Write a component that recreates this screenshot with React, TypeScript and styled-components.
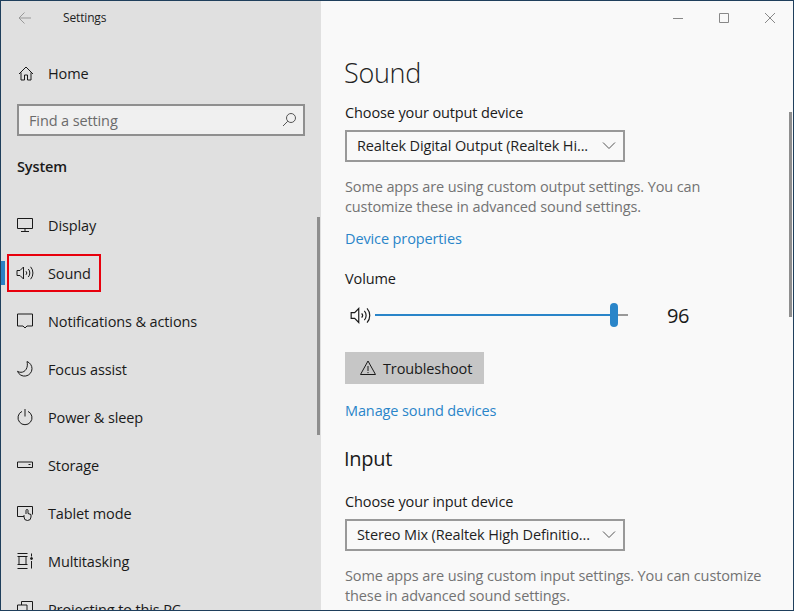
import { ReactNode } from 'react'
import styled, { createGlobalStyle } from 'styled-components'

const GlobalStyle = createGlobalStyle`
  html, body {
    margin: 0;
    padding: 0;
    overflow: hidden;
  }
  * {
    box-sizing: border-box;
  }
`

const Window = styled.div`
  width: 794px;
  height: 611px;
  display: flex;
  overflow: hidden;
  border: 1px solid #1f3f5c;
  font-family: 'Open Sans', 'Noto Sans', sans-serif;
  font-size: 14.5px;
  letter-spacing: -0.12px;
  color: #1a1a1a;
  background: #f9f9f9;
`

const Sidebar = styled.aside`
  position: relative;
  width: 320px;
  flex-shrink: 0;
  background: #e0e0e0;
  overflow: hidden;
`

const TitleBar = styled.div`
  height: 33px;
  display: flex;
  align-items: center;
  padding-left: 17px;
  color: #222;
  font-size: 12px;
  letter-spacing: -0.15px;
`

const BackIcon = styled.svg`
  width: 14px;
  height: 14px;
  margin-right: 31px;
`

const HomeRow = styled.div`
  height: 48px;
  margin-top: 15px;
  display: flex;
  align-items: center;
  padding-left: 15px;
  gap: 14px;
`

const SearchBox = styled.div`
  margin: 7px 0 0 16px;
  width: 288px;
  height: 32px;
  border: 2px solid #8f8f8f;
  background: #f0f0f0;
  display: flex;
  align-items: center;
  justify-content: space-between;
  padding: 0 6px 0 10px;
  color: #6b6b6b;
`

const SectionLabel = styled.div`
  margin: 19px 0 22px 16px;
  height: 24px;
  line-height: 24px;
  font-weight: 600;
`

const NavRow = styled.div`
  position: relative;
  height: 48px;
  display: flex;
  align-items: center;
  padding-left: 15px;
  gap: 14px;
`

const ActiveBar = styled.span`
  position: absolute;
  left: 0;
  top: 12px;
  width: 4px;
  height: 24px;
  background: #2a80c4;
`

const RedFrame = styled.span`
  position: absolute;
  left: 6px;
  top: 5px;
  width: 94px;
  height: 38px;
  border: 2px solid #e8000d;
`

const Thumb = styled.span`
  position: absolute;
  right: 1px;
  top: 216px;
  width: 3px;
  height: 218px;
  background: #8e8e8e;
`

const Content = styled.main`
  position: relative;
  flex: 1;
  padding-left: 24px;
  overflow: hidden;
`

const Caption = styled.div`
  height: 33px;
  display: flex;
  justify-content: flex-end;
  align-items: center;
  gap: 34px;
  padding-right: 17px;
`

const CaptionIcon = styled.svg`
  width: 12px;
  height: 12px;
`

const PageTitle = styled.h1`
  margin: 19px 0 0 -1px;
  font-size: 27px;
  font-weight: 300;
  line-height: 40px;
  letter-spacing: -0.3px;
  color: #222;
`

const Label = styled.div<{ $top: number }>`
  margin-top: ${p => p.$top}px;
  line-height: 20px;
`

const Dropdown = styled.div`
  margin-top: 7px;
  width: 280px;
  height: 32px;
  border: 2px solid #999;
  display: flex;
  align-items: center;
  justify-content: space-between;
  padding: 0 6px 2px 10px;
  color: #1f1f1f;
  white-space: nowrap;
`

const Hint = styled.p`
  margin: 15px 0 0;
  line-height: 20px;
  color: #737373;
  white-space: nowrap;
`

const Link = styled.a<{ $top: number }>`
  display: block;
  margin-top: ${p => p.$top}px;
  line-height: 20px;
  color: #2a85c9;
`

const VolumeRow = styled.div`
  margin-top: 10px;
  height: 32px;
  display: flex;
  align-items: center;
  padding-left: 5px;
`

const Slider = styled.div`
  position: relative;
  margin-left: 4px;
  width: 253px;
  height: 2px;
  background: #999;
`

const SliderFill = styled.div`
  height: 100%;
  background: #2a85c9;
`

const SliderThumb = styled.span`
  position: absolute;
  top: -11px;
  width: 8px;
  height: 24px;
  border-radius: 4px;
  background: #2a85c9;
`

const VolumeValue = styled.span`
  margin-left: 39px;
  font-size: 20px;
  letter-spacing: -0.5px;
`

const Button = styled.div`
  margin-top: 21px;
  width: 139px;
  height: 32px;
  display: flex;
  align-items: center;
  gap: 6px;
  padding-left: 14px;
  background: #c6c6c6;
`

const SubTitle = styled.h2`
  margin: 23px 0 0 -1px;
  font-size: 20px;
  font-weight: 400;
  line-height: 30px;
  letter-spacing: -0.3px;
`

const ScrollThumb = styled.span`
  position: absolute;
  right: 1px;
  top: 111px;
  width: 3px;
  height: 205px;
  background: #8e8e8e;
`

const Glyph = styled.svg<{ $size?: number }>`
  width: ${p => p.$size ?? 18}px;
  height: ${p => p.$size ?? 18}px;
  flex-shrink: 0;
  fill: none;
  stroke: #1a1a1a;
  stroke-width: 1;
`

const SmallGlyph = styled.svg`
  width: 16px;
  height: 16px;
  fill: none;
  stroke: #555;
  stroke-width: 1;
`

const Speaker = ({ size }: { size?: number }) => (
  <Glyph viewBox="0 0 18 18" $size={size}>
    <path d="M1 6.500h3L7.500 3v12L4 11.500H1z" />
    <path d="M10 7.200a2.600 2.600 0 0 1 0 3.600M12.300 5a6 6 0 0 1 0 8M14.600 2.800a9.400 9.400 0 0 1 0 12.400" />
  </Glyph>
)

const Chevron = () => (
  <SmallGlyph viewBox="0 0 16 16">
    <path d="M2 5.500l6 6 6-6" />
  </SmallGlyph>
)

const navItems: { label: string; icon: ReactNode; active?: boolean }[] = [
  {
    label: 'Display',
    icon: <Glyph viewBox="0 0 18 18"><path d="M1.500 2.500h15v10h-15zM9 12.500v3M5 15.500h8" /></Glyph>,
  },
  { label: 'Sound', icon: <Speaker />, active: true },
  {
    label: 'Notifications & actions',
    icon: <Glyph viewBox="0 0 18 18"><path d="M1.500 2h15v12h-5.500L9 16l-2-2H1.500z" /></Glyph>,
  },
  {
    label: 'Focus assist',
    icon: <Glyph viewBox="0 0 18 18"><path d="M11 1.500c3 1.200 5 4 5 7.200a7.500 7.500 0 0 1-14.500 2.600c1 .7 2.200 1 3.500 1 4.200 0 7.500-4.500 6-10.800z" /></Glyph>,
  },
  {
    label: 'Power & sleep',
    icon: <Glyph viewBox="0 0 18 18"><path d="M6 3.400a7 7 0 1 0 6 0M9 1v7.500" /></Glyph>,
  },
  {
    label: 'Storage',
    icon: <Glyph viewBox="0 0 18 18"><path d="M1.500 6h15v5.500h-15zM12.500 8.500h2" /></Glyph>,
  },
  {
    label: 'Tablet mode',
    icon: <Glyph viewBox="0 0 18 18"><path d="M8 12.500H1.500v-10h15v8M10 10V6.500a1 1 0 0 1 2 0v3l3 1v2.500a3.500 3.500 0 0 1-7 0v-2" /></Glyph>,
  },
  {
    label: 'Multitasking',
    icon: <Glyph viewBox="0 0 18 18"><path d="M1.500 1.500h10M1.500 16.500h10M3 4.500h7v8H3zM1.500 4.500h10M1.500 12.500h10M15.500 1.500v3M15.500 9v7.500" /><circle cx="15.500" cy="6.500" r="1" fill="#1a1a1a" /></Glyph>,
  },
  {
    label: 'Projecting to this PC',
    icon: <Glyph viewBox="0 0 18 18"><path d="M5.500 5V1.500h11v9H11M1.500 5h9.500v9H1.500z" /></Glyph>,
  },
]

export default function App() {
  return (
    <>
      <GlobalStyle />
      <Window>
        <Sidebar>
          <TitleBar>
            <BackIcon viewBox="0 0 14 14" fill="none" stroke="#999" strokeWidth="1">
              <path d="M13 7H1M6.500 1.500L1 7l5.500 5.500" />
            </BackIcon>
            Settings
          </TitleBar>
          <HomeRow>
            <Glyph viewBox="0 0 18 18"><path d="M3 10l7-7 7 7M5 8.500V16h3.500v-5h3v5H15V8.500" /></Glyph>
            Home
          </HomeRow>
          <SearchBox>
            Find a setting
            <SmallGlyph viewBox="0 0 16 16">
              <circle cx="10" cy="6" r="4.500" />
              <path d="M6.800 9.200L2 14" />
            </SmallGlyph>
          </SearchBox>
          <SectionLabel>System</SectionLabel>
          {navItems.map(item => (
            <NavRow key={item.label}>
              {item.active && <ActiveBar />}
              {item.active && <RedFrame />}
              {item.icon}
              {item.label}
            </NavRow>
          ))}
          <Thumb />
        </Sidebar>
        <Content>
          <Caption>
            <CaptionIcon viewBox="0 0 12 12" fill="none" stroke="#888"><path d="M1 6.500h10" /></CaptionIcon>
            <CaptionIcon viewBox="0 0 12 12" fill="none" stroke="#888"><path d="M1.500 1.500h9v9h-9z" /></CaptionIcon>
            <CaptionIcon viewBox="0 0 12 12" fill="none" stroke="#888"><path d="M1 1l10 10M11 1L1 11" /></CaptionIcon>
          </Caption>
          <PageTitle>Sound</PageTitle>
          <Label $top={10}>Choose your output device</Label>
          <Dropdown>
            Realtek Digital Output (Realtek Hi...
            <Chevron />
          </Dropdown>
          <Hint>
            Some apps are using custom output settings. You can
            <br />
            customize these in advanced sound settings.
          </Hint>
          <Link $top={12}>Device properties</Link>
          <Label $top={20}>Volume</Label>
          <VolumeRow>
            <Speaker size={21} />
            <Slider>
              <SliderFill style={{ width: `${(238 / 253) * 100}%` }} />
              <SliderThumb style={{ left: 235 }} />
            </Slider>
            <VolumeValue>96</VolumeValue>
          </VolumeRow>
          <Button>
            <Glyph viewBox="0 0 18 18"><path d="M9 2L1.500 15.500h15zM9 7v5M9 13v1.200" /></Glyph>
            Troubleshoot
          </Button>
          <Link $top={17}>Manage sound devices</Link>
          <SubTitle>Input</SubTitle>
          <Label $top={18}>Choose your input device</Label>
          <Dropdown>
            Stereo Mix (Realtek High Definitio...
            <Chevron />
          </Dropdown>
          <Hint>
            Some apps are using custom input settings. You can customize
            <br />
            these in advanced sound settings.
          </Hint>
          <ScrollThumb />
        </Content>
      </Window>
    </>
  )
}
